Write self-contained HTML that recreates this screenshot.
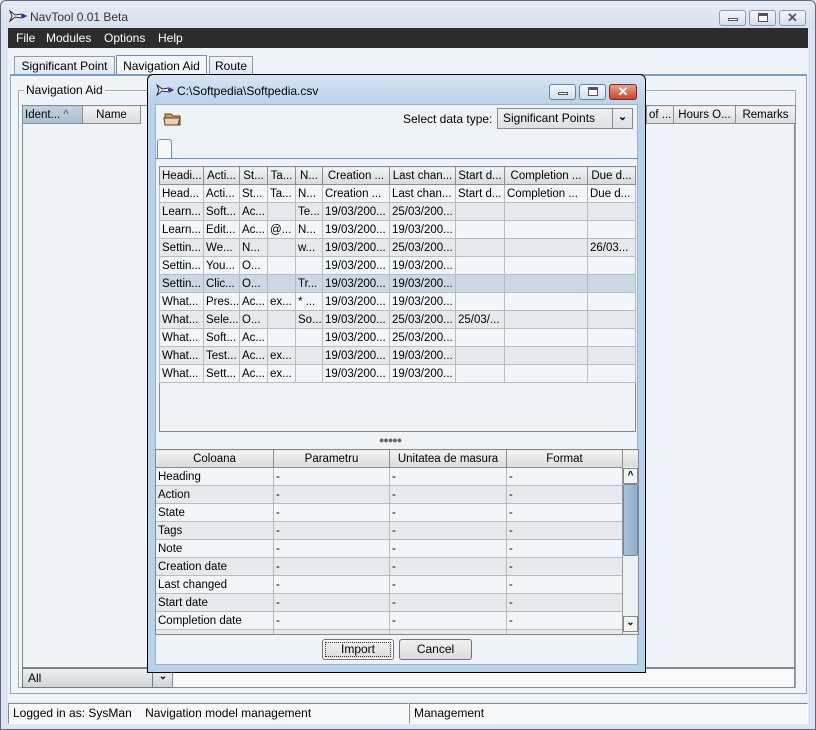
<!DOCTYPE html>
<html><head><meta charset="utf-8"><style>
*{box-sizing:border-box;margin:0;padding:0}
body{width:816px;height:730px;overflow:hidden;background:#dde6f0;font-family:"Liberation Sans",sans-serif;font-size:12px;color:#000;position:relative}
.a{position:absolute}
.wb{position:absolute;height:16px;border:1px solid #8a9bb0;border-radius:3px;background:linear-gradient(#f4f7fb,#d5dfea)}
table{border-collapse:collapse;table-layout:fixed;position:absolute}
td,th{height:18px;border:1px solid #b8bcc0;padding:0 2px;white-space:nowrap;overflow:hidden;font-weight:normal;text-align:left;font-size:11.5px}
th{background:linear-gradient(#f4f4f4,#d8dadc);border-color:#8c8c8c;text-align:center}
tr.o td{background:#e6eaee}
tr.e td{background:#f2f6fa}
tr.s td{background:#cad9e5}
.btn{position:absolute;height:21px;border:1px solid #707070;border-radius:3px;background:linear-gradient(#f2f2f2,#dcdcdc);text-align:center;line-height:19px}
</style></head><body>
<div class="a" style="left:0;top:0;width:816px;height:730px;border:1px solid #5a6a80;border-radius:6px 6px 0 0;background:linear-gradient(#e6ecf3 0,#d6e0ec 28px,#dde6f0 29px)"></div>
<svg class="a" style="left:8px;top:8px" width="20" height="16" viewBox="0 0 20 16"><path d="M2 3l5 4 7-1 4 2-4 2-7-1-5 4 2-5z" fill="#fff" stroke="#223" stroke-width="1"/><path d="M13 8h4" stroke="#33c" stroke-width="2"/></svg>
<div class="a" style="left:30px;top:10px;font-size:12px;color:#333">NavTool 0.01 Beta</div>
<div class="wb" style="left:719px;top:10px;width:27px"><div class="a" style="left:8px;top:7px;width:10px;height:3px;border:1px solid #555;background:#fff"></div></div>
<div class="wb" style="left:749px;top:10px;width:27px"><div class="a" style="left:8px;top:2px;width:10px;height:9px;border:1px solid #555;border-top-width:3px;background:#fff"></div></div>
<div class="wb" style="left:779px;top:10px;width:27px;text-align:center;line-height:13px;font-weight:bold;color:#556;font-size:13px">✕</div>
<div class="a" style="left:8px;top:28px;width:800px;height:20px;background:#2c2c2c;color:#fff;line-height:20px">
<span class="a" style="left:8px">File</span><span class="a" style="left:38px">Modules</span><span class="a" style="left:96px">Options</span><span class="a" style="left:150px">Help</span></div>
<div class="a" style="left:8px;top:48px;width:800px;height:654px;background:#eef3f8"></div>
<div class="a" style="left:14px;top:56px;width:101px;height:19px;border:1px solid #8c9cb0;border-bottom:none;background:linear-gradient(#f2f5f9,#dfe6ee);text-align:center;line-height:18px">Significant Point</div>
<div class="a" style="left:116px;top:55px;width:91px;height:20px;border:1px solid #6d8fb3;border-bottom:none;background:#f2f6fa;text-align:center;line-height:20px">Navigation Aid</div>
<div class="a" style="left:209px;top:56px;width:44px;height:19px;border:1px solid #8c9cb0;border-bottom:none;background:linear-gradient(#f2f5f9,#dfe6ee);text-align:center;line-height:18px">Route</div>
<div class="a" style="left:10px;top:74px;width:797px;height:620px;border:1px solid #8ea6c0;border-top:2px solid #7c9cc0;background:#eff4f9"></div>
<div class="a" style="left:18px;top:90px;width:778px;height:598px;border:1px solid #a0a8b0;box-shadow:inset 1px 1px 0 #fff"></div>
<div class="a" style="left:24px;top:83px;background:#eff4f9;padding:0 2px">Navigation Aid</div>
<div class="a" style="left:22px;top:105px;width:773px;height:563px;border:1px solid #888;background:#f0f4f8"></div>
<table style="left:22px;top:105px;width:118px"><tr><th style="width:60px;background:linear-gradient(#c3d3e0,#a9bfd2);text-align:left">Ident... <span style="color:#557">^</span></th><th style="width:58px">Name</th></tr></table>
<table style="left:646px;top:105px;width:149px"><tr><th style="width:27px;text-align:left">of ...</th><th style="width:62px">Hours O...</th><th style="width:60px">Remarks</th></tr></table>
<div class="a" style="left:22px;top:668px;width:151px;height:20px;border:1px solid #777;background:linear-gradient(#eef0f2,#d0d4d8);padding-left:5px;line-height:18px">All</div>
<div class="a" style="left:152px;top:668px;width:21px;height:20px;border-left:1px solid #777;text-align:center;font-size:10px;line-height:18px;font-weight:bold">&#8964;</div>
<div class="a" style="left:172px;top:668px;width:623px;height:20px;border:1px solid #888;background:#f8fafc"></div>
<div class="a" style="left:8px;top:703px;width:401px;height:21px;border:1px solid #888;border-right-color:#fff;border-bottom-color:#fff;background:#f6f8fa;line-height:19px;padding-left:4px">Logged in as: SysMan &nbsp;&nbsp; Navigation model management</div>
<div class="a" style="left:409px;top:703px;width:399px;height:21px;border:1px solid #888;border-right-color:#fff;border-bottom-color:#fff;background:#f6f8fa;line-height:19px;padding-left:4px">Management</div>

<div class="a" style="left:147px;top:74px;width:499px;height:599px;border:1px solid #000;border-radius:6px 6px 0 0;background:linear-gradient(#d6e5f4,#b9d1ea 30px)"></div>
<svg class="a" style="left:155px;top:82px" width="20" height="16" viewBox="0 0 20 16"><path d="M2 3l5 4 7-1 4 2-4 2-7-1-5 4 2-5z" fill="#fff" stroke="#223" stroke-width="1"/><path d="M13 8h4" stroke="#33c" stroke-width="2"/></svg>
<div class="a" style="left:177px;top:84px">C:\Softpedia\Softpedia.csv</div>
<div class="wb" style="left:549px;top:84px;width:27px;border-color:#6d7f9a"><div class="a" style="left:8px;top:7px;width:10px;height:3px;border:1px solid #555;background:#fff"></div></div>
<div class="wb" style="left:579px;top:84px;width:27px;border-color:#6d7f9a"><div class="a" style="left:8px;top:2px;width:10px;height:9px;border:1px solid #555;border-top-width:3px;background:#fff"></div></div>
<div class="wb" style="left:609px;top:84px;width:28px;border-color:#7a2a20;background:linear-gradient(#e8a090,#c8442c);color:#fff;text-align:center;line-height:13px;font-weight:bold;font-size:13px">✕</div>
<div class="a" style="left:155px;top:104px;width:483px;height:561px;background:#eef3f8;border:1px solid #9bb2c8"></div>
<svg class="a" style="left:163px;top:111px" width="22" height="16" viewBox="0 0 22 16"><path d="M2 3h6l2 2h7v9H2z" fill="#c8a070" stroke="#604020"/><path d="M1 7h16l-2 7H2z" fill="#e8d0b0" stroke="#604020"/></svg>
<div class="a" style="left:403px;top:112px">Select data type:</div>
<div class="a" style="left:497px;top:108px;width:136px;height:21px;border:1px solid #888;background:linear-gradient(#f0f2f4,#dde0e4);padding-left:5px;line-height:19px">Significant Points</div>
<div class="a" style="left:612px;top:108px;width:21px;height:21px;border:1px solid #888;text-align:center;font-weight:bold;line-height:17px;font-size:11px">&#8964;</div>
<div class="a" style="left:157px;top:139px;width:15px;height:20px;border:1px solid #6d8fb3;border-bottom:none;border-radius:3px 3px 0 0;background:#f4f7fa"></div>
<div class="a" style="left:155px;top:158px;width:483px;height:280px;border-top:1px solid #6d8fb3"></div>
<div class="a" style="left:159px;top:166px;width:477px;height:266px;border:1px solid #888;background:#f0f4f8"></div>
<table style="left:159px;top:166px;width:476px">
<colgroup><col style="width:44px"><col style="width:36px"><col style="width:28px"><col style="width:28px"><col style="width:27px"><col style="width:67px"><col style="width:66px"><col style="width:49px"><col style="width:83px"><col style="width:48px"></colgroup>
<tr><th>Headi...</th><th>Acti...</th><th>St...</th><th>Ta...</th><th>N...</th><th>Creation ...</th><th>Last chan...</th><th>Start d...</th><th>Completion ...</th><th>Due d...</th></tr>
<tr class="e"><td>Head...</td><td>Acti...</td><td>St...</td><td>Ta...</td><td>N...</td><td>Creation ...</td><td>Last chan...</td><td>Start d...</td><td>Completion ...</td><td>Due d...</td></tr>
<tr class="o"><td>Learn...</td><td>Soft...</td><td>Ac...</td><td></td><td>Te...</td><td>19/03/200...</td><td>25/03/200...</td><td></td><td></td><td></td></tr>
<tr class="e"><td>Learn...</td><td>Edit...</td><td>Ac...</td><td>@...</td><td>N...</td><td>19/03/200...</td><td>19/03/200...</td><td></td><td></td><td></td></tr>
<tr class="o"><td>Settin...</td><td>We...</td><td>N...</td><td></td><td>w...</td><td>19/03/200...</td><td>25/03/200...</td><td></td><td></td><td>26/03...</td></tr>
<tr class="e"><td>Settin...</td><td>You...</td><td>O...</td><td></td><td></td><td>19/03/200...</td><td>19/03/200...</td><td></td><td></td><td></td></tr>
<tr class="s"><td>Settin...</td><td>Clic...</td><td>O...</td><td></td><td>Tr...</td><td>19/03/200...</td><td>19/03/200...</td><td></td><td></td><td></td></tr>
<tr class="e"><td>What...</td><td>Pres...</td><td>Ac...</td><td>ex...</td><td>* ...</td><td>19/03/200...</td><td>19/03/200...</td><td></td><td></td><td></td></tr>
<tr class="o"><td>What...</td><td>Sele...</td><td>O...</td><td></td><td>So...</td><td>19/03/200...</td><td>25/03/200...</td><td>25/03/...</td><td></td><td></td></tr>
<tr class="e"><td>What...</td><td>Soft...</td><td>Ac...</td><td></td><td></td><td>19/03/200...</td><td>25/03/200...</td><td></td><td></td><td></td></tr>
<tr class="o"><td>What...</td><td>Test...</td><td>Ac...</td><td>ex...</td><td></td><td>19/03/200...</td><td>19/03/200...</td><td></td><td></td><td></td></tr>
<tr class="e"><td>What...</td><td>Sett...</td><td>Ac...</td><td>ex...</td><td></td><td>19/03/200...</td><td>19/03/200...</td><td></td><td></td><td></td></tr>
</table>
<div class="a" style="left:379px;top:435px;font-size:9px;color:#666;letter-spacing:-1px">●●●●●</div>
<div class="a" style="left:155px;top:449px;width:484px;height:186px;border:1px solid #888;background:#f0f4f8;overflow:hidden">
<table style="left:-1px;top:-1px;width:484px">
<colgroup><col style="width:118px"><col style="width:116px"><col style="width:117px"><col style="width:116px"><col style="width:17px"></colgroup>
<tr><th>Coloana</th><th>Parametru</th><th>Unitatea de masura</th><th>Format</th><th></th></tr>
<tr class="e"><td>Heading</td><td>-</td><td>-</td><td>-</td><td></td></tr>
<tr class="o"><td>Action</td><td>-</td><td>-</td><td>-</td><td></td></tr>
<tr class="e"><td>State</td><td>-</td><td>-</td><td>-</td><td></td></tr>
<tr class="o"><td>Tags</td><td>-</td><td>-</td><td>-</td><td></td></tr>
<tr class="e"><td>Note</td><td>-</td><td>-</td><td>-</td><td></td></tr>
<tr class="o"><td>Creation date</td><td>-</td><td>-</td><td>-</td><td></td></tr>
<tr class="e"><td>Last changed</td><td>-</td><td>-</td><td>-</td><td></td></tr>
<tr class="o"><td>Start date</td><td>-</td><td>-</td><td>-</td><td></td></tr>
<tr class="e"><td>Completion date</td><td>-</td><td>-</td><td>-</td><td></td></tr>
<tr class="o"><td></td><td></td><td></td><td></td><td></td></tr>
</table>
<div class="a" style="left:466px;top:17px;width:17px;height:168px;background:#eef0f2;border-left:1px solid #999"></div>
<div class="a" style="left:467px;top:18px;width:15px;height:16px;border:1px solid #888;background:#f2f4f6;text-align:center;font-size:10px;font-weight:bold;line-height:14px">^</div>
<div class="a" style="left:467px;top:34px;width:15px;height:72px;border:1px solid #6a8aaa;border-radius:2px;background:linear-gradient(90deg,#a9c4dc,#8fb0cc)"></div>
<div class="a" style="left:467px;top:166px;width:15px;height:16px;border:1px solid #888;background:#f2f4f6;text-align:center;font-size:10px;font-weight:bold;line-height:12px">&#8964;</div>
</div>
<div class="btn" style="left:322px;top:639px;width:72px;box-shadow:inset 0 0 0 1px #fff;outline:1px dotted #333;outline-offset:-4px">Import</div>
<div class="btn" style="left:399px;top:639px;width:73px">Cancel</div>
</body></html>
